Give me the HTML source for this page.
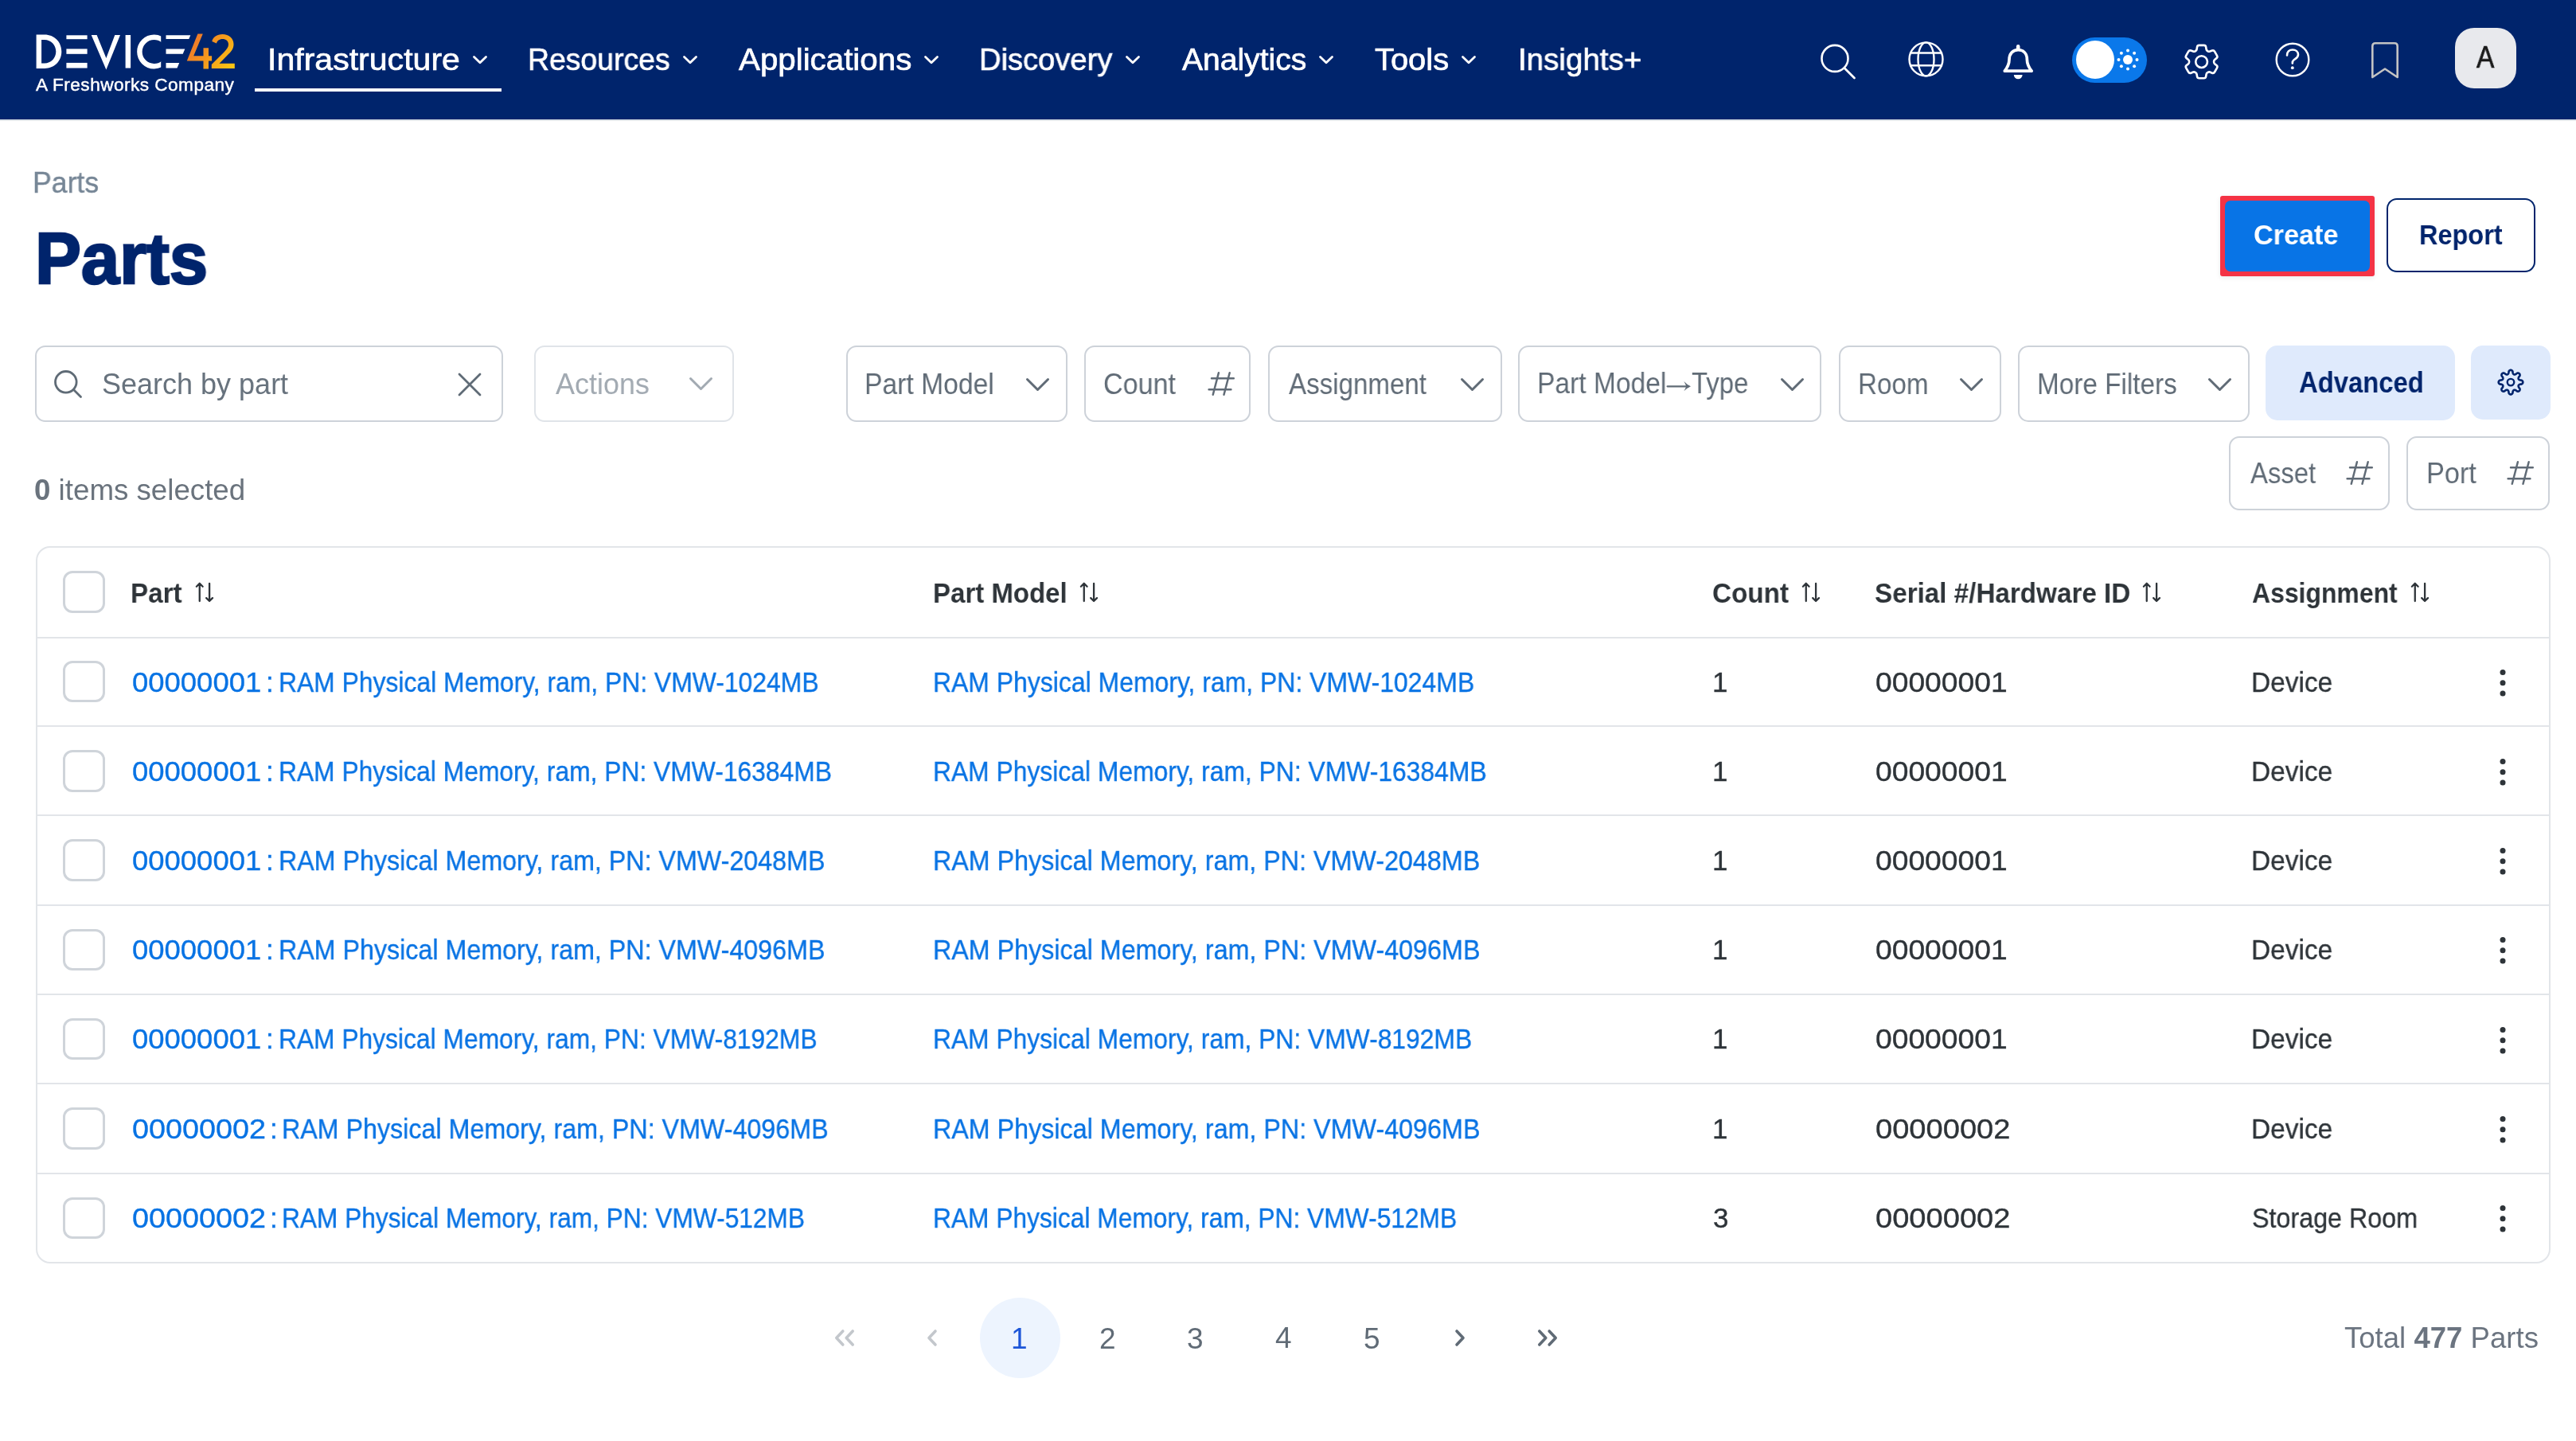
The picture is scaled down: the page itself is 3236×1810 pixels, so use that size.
<!DOCTYPE html>
<html><head><meta charset="utf-8"><title>Parts</title>
<style>
html,body{margin:0;padding:0;width:3236px;height:1810px;overflow:hidden;background:#fff;}
body{position:relative;font-family:"Liberation Sans",sans-serif;}
.t{position:absolute;white-space:nowrap;line-height:1;transform-origin:0 0;will-change:transform;}
svg{overflow:visible}
</style></head><body>
<div style="position:absolute;left:0px;top:0px;width:3236px;height:150px;box-sizing:border-box;background:#00246c"></div>
<div style="position:absolute;left:0px;top:150px;width:3236px;height:2px;box-sizing:border-box;background:#e1e5ea"></div>
<svg style="position:absolute;left:40px;top:35px" width="260" height="60" viewBox="0 0 260 60" fill="none">
<defs><linearGradient id="lg" gradientUnits="userSpaceOnUse" x1="192" y1="5" x2="256" y2="50">
<stop offset="0" stop-color="#ec6a2f"/><stop offset="0.5" stop-color="#f4951f"/><stop offset="1" stop-color="#fdca12"/></linearGradient>
<clipPath id="cc"><rect x="120" y="0" width="42.2" height="60"/></clipPath></defs>
<g fill="#fff">
<path d="M5.6 8.6 H16 C28 8.6 37.3 17.5 37.3 29.8 C37.3 42 28 51 16 51 H5.6 Z M12.1 15.1 V44.5 H16 C24 44.5 30.3 38 30.3 29.8 C30.3 21.6 24 15.1 16 15.1 Z"/>
<rect x="43.4" y="9.3" width="26.2" height="4.9"/>
<rect x="43.4" y="26.4" width="26.2" height="6.4"/>
<rect x="43.4" y="43.9" width="26.2" height="6.6"/>
<path d="M74.7 9 H81.6 L93.4 38 L104.3 9 H111 L93.4 52.5 Z"/>
<rect x="117.6" y="9" width="6.5" height="41.5"/>
<path d="M168.5 9.2 H199.3 L197.3 14.1 H168.5 Z"/>
<path d="M168.5 26.4 H192.3 L189.7 32.8 H168.5 Z"/>
<path d="M168.5 43.9 H185.2 L182.5 50.5 H168.5 Z"/>
</g>
<circle cx="153.6" cy="30" r="18.2" stroke="#fff" stroke-width="6.5" clip-path="url(#cc)"/>
<path fill="url(#lg)" d="M208.4 7.6 H214.8 L203.2 35.3 H215.5 V25.2 H222 V35.3 H226.1 V41.4 H222 V51.5 H215.5 V41.4 H194.8 Z"/>
<path fill="url(#lg)" d="M226.3 17 C227.5 11.5 232.5 8 239.5 8 C247.5 8 253.5 13 253.5 20.5 C253.5 26 250.5 30 245.5 34.5 L235.5 44.7 H254.8 V51 H225.8 V46 L241 31 C245 27 247 24 247 20.8 C247 16.5 243.8 14 239.5 14 C235.5 14 232.8 16.3 232 19.5 Z"/>
</svg>
<svg style="position:absolute;left:593px;top:67px" width="20" height="17" viewBox="0 0 20 17" fill="none"><path d="M2.5 4.5 L10 11.8 L17.5 4.5" stroke="#fff" stroke-width="2.8" stroke-linecap="round" stroke-linejoin="round"/></svg>
<svg style="position:absolute;left:857px;top:67px" width="20" height="17" viewBox="0 0 20 17" fill="none"><path d="M2.5 4.5 L10 11.8 L17.5 4.5" stroke="#fff" stroke-width="2.8" stroke-linecap="round" stroke-linejoin="round"/></svg>
<svg style="position:absolute;left:1160px;top:67px" width="20" height="17" viewBox="0 0 20 17" fill="none"><path d="M2.5 4.5 L10 11.8 L17.5 4.5" stroke="#fff" stroke-width="2.8" stroke-linecap="round" stroke-linejoin="round"/></svg>
<svg style="position:absolute;left:1413px;top:67px" width="20" height="17" viewBox="0 0 20 17" fill="none"><path d="M2.5 4.5 L10 11.8 L17.5 4.5" stroke="#fff" stroke-width="2.8" stroke-linecap="round" stroke-linejoin="round"/></svg>
<svg style="position:absolute;left:1656px;top:67px" width="20" height="17" viewBox="0 0 20 17" fill="none"><path d="M2.5 4.5 L10 11.8 L17.5 4.5" stroke="#fff" stroke-width="2.8" stroke-linecap="round" stroke-linejoin="round"/></svg>
<svg style="position:absolute;left:1835px;top:67px" width="20" height="17" viewBox="0 0 20 17" fill="none"><path d="M2.5 4.5 L10 11.8 L17.5 4.5" stroke="#fff" stroke-width="2.8" stroke-linecap="round" stroke-linejoin="round"/></svg>
<div style="position:absolute;left:320px;top:111px;width:310px;height:4px;box-sizing:border-box;background:#fff"></div>
<svg style="position:absolute;left:2280px;top:50px" width="60" height="56" viewBox="0 0 60 56" fill="none"><circle cx="25" cy="23.4" r="16.5" stroke="#fff" stroke-width="2.6"/><path d="M37 35.5 L49.5 48" stroke="#fff" stroke-width="2.8" stroke-linecap="round"/></svg>
<svg style="position:absolute;left:2390px;top:46px" width="60" height="58" viewBox="0 0 60 58" fill="none"><g stroke="#fff" stroke-width="2.4"><circle cx="29.5" cy="28.4" r="21"/><ellipse cx="29.5" cy="28.4" rx="10" ry="21"/><path d="M9 20.5 H50 M9 36.3 H50"/></g></svg>
<svg style="position:absolute;left:2510px;top:50px" width="50" height="56" viewBox="0 0 50 56" fill="none"><path d="M8.3 39.2 C12.3 34 14 30 14 25 C14 17.3 18.5 12.7 25.2 12.7 C31.9 12.7 36.4 17.3 36.4 25 C36.4 30 38.1 34 42.1 39.2 Z" stroke="#fff" stroke-width="3.7" stroke-linejoin="round"/><path d="M25.2 8.4 V10.6" stroke="#fff" stroke-width="4.6" stroke-linecap="round"/><path d="M19.8 43.9 A5.4 5.4 0 0 0 30.6 43.9 Z" fill="#fff"/></svg>
<div style="position:absolute;left:2603px;top:47px;width:94px;height:57px;box-sizing:border-box;background:#0a78ea;border-radius:29px"></div>
<div style="position:absolute;left:2608px;top:51px;width:48px;height:48px;box-sizing:border-box;background:#fff;border-radius:50%"></div>
<svg style="position:absolute;left:2653px;top:55px" width="40" height="40" viewBox="0 0 40 40" fill="none"><circle cx="20" cy="20" r="6" fill="#fff"/><circle cx="31.50" cy="20.00" r="2" fill="#fff"/><circle cx="28.13" cy="28.13" r="2" fill="#fff"/><circle cx="20.00" cy="31.50" r="2" fill="#fff"/><circle cx="11.87" cy="28.13" r="2" fill="#fff"/><circle cx="8.50" cy="20.00" r="2" fill="#fff"/><circle cx="11.87" cy="11.87" r="2" fill="#fff"/><circle cx="20.00" cy="8.50" r="2" fill="#fff"/><circle cx="28.13" cy="11.87" r="2" fill="#fff"/></svg>
<svg style="position:absolute;left:2737.9px;top:50px" width="55.2" height="55.2" viewBox="0 0 24 24" fill="none"><path d="M9.594 3.94c.09-.542.56-.94 1.11-.94h2.593c.55 0 1.02.398 1.11.94l.213 1.281c.063.374.313.686.645.87.074.04.147.083.22.127.325.196.72.257 1.075.124l1.217-.456a1.125 1.125 0 0 1 1.37.49l1.296 2.247a1.125 1.125 0 0 1-.26 1.431l-1.003.827c-.293.241-.438.613-.43.992a7.723 7.723 0 0 1 0 .255c-.008.378.137.75.43.991l1.004.827c.424.35.534.955.26 1.43l-1.298 2.247a1.125 1.125 0 0 1-1.369.491l-1.217-.456c-.355-.133-.75-.072-1.076.124a6.47 6.47 0 0 1-.22.128c-.331.183-.581.495-.644.869l-.213 1.281c-.09.543-.56.94-1.11.94h-2.594c-.55 0-1.019-.398-1.11-.94l-.213-1.281c-.062-.374-.312-.686-.644-.87a6.52 6.52 0 0 1-.22-.127c-.325-.196-.72-.257-1.076-.124l-1.217.456a1.125 1.125 0 0 1-1.369-.49l-1.297-2.247a1.125 1.125 0 0 1 .26-1.431l1.004-.827c.292-.24.437-.613.43-.991a6.932 6.932 0 0 1 0-.255c.007-.38-.138-.751-.43-.992l-1.004-.827a1.125 1.125 0 0 1-.26-1.43l1.297-2.247a1.125 1.125 0 0 1 1.37-.491l1.216.456c.356.133.751.072 1.076-.124.072-.044.146-.086.22-.128.332-.183.582-.495.644-.869l.214-1.28Z" stroke="#fff" stroke-width="1.15" stroke-linejoin="round"/><circle cx="12" cy="12" r="3.2" stroke="#fff" stroke-width="1.15"/></svg>
<svg style="position:absolute;left:2855px;top:50px" width="50" height="50" viewBox="0 0 50 50" fill="none"><circle cx="25" cy="25" r="20.3" stroke="#fff" stroke-width="2.4"/><path d="M18 19.5 C18 15 21 12.5 25 12.5 C29 12.5 32 15 32 18.8 C32 22.5 28.5 23.8 26.3 25.5 C25.2 26.3 24.8 27.5 24.8 29.5" stroke="#fff" stroke-width="2.6" stroke-linecap="round"/><circle cx="24.8" cy="35.2" r="1.9" fill="#fff"/></svg>
<svg style="position:absolute;left:2975px;top:50px" width="42" height="50" viewBox="0 0 42 50" fill="none"><path d="M5.3 47 V8 Q5.3 4.3 9 4.3 H33 Q36.7 4.3 36.7 8 V47 L21 36.5 Z" stroke="#c3c3c3" stroke-width="2.6" stroke-linejoin="round"/></svg>
<div style="position:absolute;left:3084px;top:35px;width:77px;height:76px;box-sizing:border-box;background:#e8e9ed;border-radius:24px"></div>
<div style="position:absolute;left:2789px;top:246px;width:194px;height:101px;box-sizing:border-box;background:#f43345;border-radius:3px;box-shadow:0 2px 6px rgba(0,0,0,0.08)"></div>
<div style="position:absolute;left:2795px;top:252px;width:182px;height:89px;box-sizing:border-box;background:#0874e6;border-radius:7px"></div>
<div style="position:absolute;left:2998px;top:249px;width:187px;height:93px;box-sizing:border-box;border:2.6px solid #00246c;border-radius:13px;background:#fff"></div>
<div style="position:absolute;left:44px;top:434px;width:588px;height:96px;box-sizing:border-box;border:2px solid #cdd2d9;border-radius:13px;background:#fff"></div>
<svg style="position:absolute;left:66px;top:463px" width="40" height="40" viewBox="0 0 40 40" fill="none"><circle cx="16.8" cy="16.8" r="13.3" stroke="#5f6b76" stroke-width="2.8"/><path d="M26.5 26.5 L35.5 35.5" stroke="#5f6b76" stroke-width="2.8" stroke-linecap="round"/></svg>
<svg style="position:absolute;left:574px;top:467px" width="32" height="32" viewBox="0 0 32 32" fill="none"><path d="M3 3 L29 29 M29 3 L3 29" stroke="#5f6b76" stroke-width="2.8" stroke-linecap="round"/></svg>
<div style="position:absolute;left:671px;top:434px;width:251px;height:96px;box-sizing:border-box;border:2px solid #e0e4e9;border-radius:13px;background:#fff"></div>
<svg style="position:absolute;left:864px;top:472px" width="33" height="20" viewBox="0 0 33 20" fill="none"><path d="M3.5 3.5 L16.5 16.5 L29.5 3.5" stroke="#a2aab2" stroke-width="3" stroke-linecap="round" stroke-linejoin="round"/></svg>
<div style="position:absolute;left:1062.5px;top:434px;width:278.5px;height:96px;box-sizing:border-box;border:2px solid #cdd2d9;border-radius:13px;background:#fff"></div>
<svg style="position:absolute;left:1287px;top:472.5px" width="33" height="20" viewBox="0 0 33 20" fill="none"><path d="M3.5 3.5 L16.5 16.5 L29.5 3.5" stroke="#606b76" stroke-width="3" stroke-linecap="round" stroke-linejoin="round"/></svg>
<div style="position:absolute;left:1362px;top:434px;width:209px;height:96px;box-sizing:border-box;border:2px solid #cdd2d9;border-radius:13px;background:#fff"></div>
<svg style="position:absolute;left:1518px;top:467px" width="34" height="31" viewBox="0 0 34 31" fill="none"><g stroke="#606b76" stroke-width="2.5" stroke-linecap="round"><path d="M12.9 1.2 L5.75 28.7 M26.7 1.2 L19.5 28.7 M4 8.3 H31.8 M0.6 22.2 H28.4"/></g></svg>
<div style="position:absolute;left:1593px;top:434px;width:294px;height:96px;box-sizing:border-box;border:2px solid #cdd2d9;border-radius:13px;background:#fff"></div>
<svg style="position:absolute;left:1833px;top:472.5px" width="33" height="20" viewBox="0 0 33 20" fill="none"><path d="M3.5 3.5 L16.5 16.5 L29.5 3.5" stroke="#606b76" stroke-width="3" stroke-linecap="round" stroke-linejoin="round"/></svg>
<div style="position:absolute;left:1906.6px;top:434px;width:381.7000000000003px;height:96px;box-sizing:border-box;border:2px solid #cdd2d9;border-radius:13px;background:#fff"></div>
<svg style="position:absolute;left:2090px;top:476px" width="36" height="18" viewBox="0 0 36 18" fill="none"><path d="M4.6 9.3 H31" stroke="#606b76" stroke-width="2.3" stroke-linecap="round"/><path d="M25.4 3 Q29 7 34 9.3 Q29 11.6 25.4 15.2 Q27.6 11.5 28.2 9.3 Q27.6 7 25.4 3 Z" fill="#606b76"/></svg>
<svg style="position:absolute;left:2235px;top:472.5px" width="33" height="20" viewBox="0 0 33 20" fill="none"><path d="M3.5 3.5 L16.5 16.5 L29.5 3.5" stroke="#606b76" stroke-width="3" stroke-linecap="round" stroke-linejoin="round"/></svg>
<div style="position:absolute;left:2309.7px;top:434px;width:204.60000000000036px;height:96px;box-sizing:border-box;border:2px solid #cdd2d9;border-radius:13px;background:#fff"></div>
<svg style="position:absolute;left:2460px;top:472.5px" width="33" height="20" viewBox="0 0 33 20" fill="none"><path d="M3.5 3.5 L16.5 16.5 L29.5 3.5" stroke="#606b76" stroke-width="3" stroke-linecap="round" stroke-linejoin="round"/></svg>
<div style="position:absolute;left:2534.6px;top:434px;width:291.4000000000001px;height:96px;box-sizing:border-box;border:2px solid #cdd2d9;border-radius:13px;background:#fff"></div>
<svg style="position:absolute;left:2772px;top:472.5px" width="33" height="20" viewBox="0 0 33 20" fill="none"><path d="M3.5 3.5 L16.5 16.5 L29.5 3.5" stroke="#606b76" stroke-width="3" stroke-linecap="round" stroke-linejoin="round"/></svg>
<div style="position:absolute;left:2846px;top:434px;width:238px;height:94px;box-sizing:border-box;background:#dfeafc;border-radius:15px"></div>
<div style="position:absolute;left:3104px;top:434px;width:100px;height:93px;box-sizing:border-box;background:#dfeafc;border-radius:15px"></div>
<svg style="position:absolute;left:3134px;top:460px" width="40" height="40" viewBox="0 0 40 40" fill="none"><path d="M20.00 4.80 L20.40 4.83 L20.79 4.93 L21.18 5.10 L21.55 5.35 L21.90 5.67 L22.22 6.09 L22.48 6.70 L22.55 8.10 L22.74 8.71 L22.94 9.14 L23.14 9.49 L23.36 9.77 L23.58 10.00 L23.81 10.18 L24.06 10.31 L24.32 10.39 L24.61 10.43 L24.93 10.42 L25.28 10.38 L25.67 10.28 L26.12 10.11 L26.68 9.81 L27.72 8.87 L28.34 8.63 L28.86 8.55 L29.34 8.57 L29.77 8.66 L30.16 8.81 L30.51 9.02 L30.82 9.28 L31.08 9.59 L31.29 9.94 L31.44 10.33 L31.53 10.76 L31.55 11.24 L31.47 11.76 L31.23 12.38 L30.29 13.42 L29.99 13.98 L29.82 14.43 L29.72 14.82 L29.68 15.17 L29.67 15.49 L29.71 15.78 L29.79 16.04 L29.92 16.29 L30.10 16.52 L30.33 16.74 L30.61 16.96 L30.96 17.16 L31.39 17.36 L32.00 17.55 L33.40 17.62 L34.01 17.88 L34.43 18.20 L34.75 18.55 L35.00 18.92 L35.17 19.31 L35.27 19.70 L35.30 20.10 L35.27 20.50 L35.17 20.89 L35.00 21.28 L34.75 21.65 L34.43 22.00 L34.01 22.32 L33.40 22.58 L32.00 22.65 L31.39 22.84 L30.96 23.04 L30.61 23.24 L30.33 23.46 L30.10 23.68 L29.92 23.91 L29.79 24.16 L29.71 24.42 L29.67 24.71 L29.68 25.03 L29.72 25.38 L29.82 25.77 L29.99 26.22 L30.29 26.78 L31.23 27.82 L31.47 28.44 L31.55 28.96 L31.53 29.44 L31.44 29.87 L31.29 30.26 L31.08 30.61 L30.82 30.92 L30.51 31.18 L30.16 31.39 L29.77 31.54 L29.34 31.63 L28.86 31.65 L28.34 31.57 L27.72 31.33 L26.68 30.39 L26.12 30.09 L25.67 29.92 L25.28 29.82 L24.93 29.78 L24.61 29.77 L24.32 29.81 L24.06 29.89 L23.81 30.02 L23.58 30.20 L23.36 30.43 L23.14 30.71 L22.94 31.06 L22.74 31.49 L22.55 32.10 L22.48 33.50 L22.22 34.11 L21.90 34.53 L21.55 34.85 L21.18 35.10 L20.79 35.27 L20.40 35.37 L20.00 35.40 L19.60 35.37 L19.21 35.27 L18.82 35.10 L18.45 34.85 L18.10 34.53 L17.78 34.11 L17.52 33.50 L17.45 32.10 L17.26 31.49 L17.06 31.06 L16.86 30.71 L16.64 30.43 L16.42 30.20 L16.19 30.02 L15.94 29.89 L15.68 29.81 L15.39 29.77 L15.07 29.78 L14.72 29.82 L14.33 29.92 L13.88 30.09 L13.32 30.39 L12.28 31.33 L11.66 31.57 L11.14 31.65 L10.66 31.63 L10.23 31.54 L9.84 31.39 L9.49 31.18 L9.18 30.92 L8.92 30.61 L8.71 30.26 L8.56 29.87 L8.47 29.44 L8.45 28.96 L8.53 28.44 L8.77 27.82 L9.71 26.78 L10.01 26.22 L10.18 25.77 L10.28 25.38 L10.32 25.03 L10.33 24.71 L10.29 24.42 L10.21 24.16 L10.08 23.91 L9.90 23.68 L9.67 23.46 L9.39 23.24 L9.04 23.04 L8.61 22.84 L8.00 22.65 L6.60 22.58 L5.99 22.32 L5.57 22.00 L5.25 21.65 L5.00 21.28 L4.83 20.89 L4.73 20.50 L4.70 20.10 L4.73 19.70 L4.83 19.31 L5.00 18.92 L5.25 18.55 L5.57 18.20 L5.99 17.88 L6.60 17.62 L8.00 17.55 L8.61 17.36 L9.04 17.16 L9.39 16.96 L9.67 16.74 L9.90 16.52 L10.08 16.29 L10.21 16.04 L10.29 15.78 L10.33 15.49 L10.32 15.17 L10.28 14.82 L10.18 14.43 L10.01 13.98 L9.71 13.42 L8.77 12.38 L8.53 11.76 L8.45 11.24 L8.47 10.76 L8.56 10.33 L8.71 9.94 L8.92 9.59 L9.18 9.28 L9.49 9.02 L9.84 8.81 L10.23 8.66 L10.66 8.57 L11.14 8.55 L11.66 8.63 L12.28 8.87 L13.32 9.81 L13.88 10.11 L14.33 10.28 L14.72 10.38 L15.07 10.42 L15.39 10.43 L15.68 10.39 L15.94 10.31 L16.19 10.18 L16.42 10.00 L16.64 9.77 L16.86 9.49 L17.06 9.14 L17.26 8.71 L17.45 8.10 L17.52 6.70 L17.78 6.09 L18.10 5.67 L18.45 5.35 L18.82 5.10 L19.21 4.93 L19.60 4.83 L20.00 4.80 Z" stroke="#00246c" stroke-width="2.6" stroke-linejoin="round"/><circle cx="20" cy="20.1" r="4.25" stroke="#00246c" stroke-width="2.4"/></svg>
<div style="position:absolute;left:2799.5px;top:547.5px;width:202.5px;height:93.79999999999995px;box-sizing:border-box;border:2px solid #cdd2d9;border-radius:13px;background:#fff"></div>
<svg style="position:absolute;left:2948px;top:579px" width="34" height="31" viewBox="0 0 34 31" fill="none"><g stroke="#606b76" stroke-width="2.5" stroke-linecap="round"><path d="M12.9 1.2 L5.75 28.7 M26.7 1.2 L19.5 28.7 M4 8.3 H31.8 M0.6 22.2 H28.4"/></g></svg>
<div style="position:absolute;left:3022.5px;top:547.5px;width:180.9000000000001px;height:93.79999999999995px;box-sizing:border-box;border:2px solid #cdd2d9;border-radius:13px;background:#fff"></div>
<svg style="position:absolute;left:3149.6px;top:579px" width="34" height="31" viewBox="0 0 34 31" fill="none"><g stroke="#606b76" stroke-width="2.5" stroke-linecap="round"><path d="M12.9 1.2 L5.75 28.7 M26.7 1.2 L19.5 28.7 M4 8.3 H31.8 M0.6 22.2 H28.4"/></g></svg>
<div style="position:absolute;left:45px;top:686px;width:3159px;height:901px;box-sizing:border-box;border:2px solid #e2e5e9;border-radius:18px;background:#fff"></div>
<div style="position:absolute;left:79px;top:717.0px;width:53px;height:52.59999999999991px;box-sizing:border-box;border:3.6px solid #cfd4da;border-radius:12px;background:#fff"></div>
<svg style="position:absolute;left:245.8px;top:731px" width="24" height="26" viewBox="0 0 24 26" fill="none"><g stroke="#2e3439" stroke-width="2.3" stroke-linecap="round" stroke-linejoin="round"><path d="M4.75 24 V1.8 M0.9 5.7 L4.75 1.8 L8.6 5.7 M17.1 1.8 V24 M13.2 20.1 L17.1 24 L21 20.1"/></g></svg>
<svg style="position:absolute;left:1356.7px;top:731px" width="24" height="26" viewBox="0 0 24 26" fill="none"><g stroke="#2e3439" stroke-width="2.3" stroke-linecap="round" stroke-linejoin="round"><path d="M4.75 24 V1.8 M0.9 5.7 L4.75 1.8 L8.6 5.7 M17.1 1.8 V24 M13.2 20.1 L17.1 24 L21 20.1"/></g></svg>
<svg style="position:absolute;left:2264px;top:731px" width="24" height="26" viewBox="0 0 24 26" fill="none"><g stroke="#2e3439" stroke-width="2.3" stroke-linecap="round" stroke-linejoin="round"><path d="M4.75 24 V1.8 M0.9 5.7 L4.75 1.8 L8.6 5.7 M17.1 1.8 V24 M13.2 20.1 L17.1 24 L21 20.1"/></g></svg>
<svg style="position:absolute;left:2692px;top:731px" width="24" height="26" viewBox="0 0 24 26" fill="none"><g stroke="#2e3439" stroke-width="2.3" stroke-linecap="round" stroke-linejoin="round"><path d="M4.75 24 V1.8 M0.9 5.7 L4.75 1.8 L8.6 5.7 M17.1 1.8 V24 M13.2 20.1 L17.1 24 L21 20.1"/></g></svg>
<svg style="position:absolute;left:3028.8px;top:731px" width="24" height="26" viewBox="0 0 24 26" fill="none"><g stroke="#2e3439" stroke-width="2.3" stroke-linecap="round" stroke-linejoin="round"><path d="M4.75 24 V1.8 M0.9 5.7 L4.75 1.8 L8.6 5.7 M17.1 1.8 V24 M13.2 20.1 L17.1 24 L21 20.1"/></g></svg>
<div style="position:absolute;left:47px;top:800px;width:3155px;height:2px;box-sizing:border-box;background:#e2e5e9"></div>
<div style="position:absolute;left:79px;top:829.7px;width:53px;height:52.59999999999991px;box-sizing:border-box;border:3.6px solid #cfd4da;border-radius:12px;background:#fff"></div>
<svg style="position:absolute;left:3137px;top:836.5px" width="14" height="36" viewBox="0 0 14 36" fill="none"><g fill="#2e3439"><circle cx="7" cy="7.5" r="3.5"/><circle cx="7" cy="20.7" r="3.5"/><circle cx="7" cy="34" r="3.5"/></g></svg>
<div style="position:absolute;left:47px;top:911px;width:3155px;height:2px;box-sizing:border-box;background:#e2e5e9"></div>
<div style="position:absolute;left:79px;top:942.0px;width:53px;height:52.59999999999991px;box-sizing:border-box;border:3.6px solid #cfd4da;border-radius:12px;background:#fff"></div>
<svg style="position:absolute;left:3137px;top:948.8px" width="14" height="36" viewBox="0 0 14 36" fill="none"><g fill="#2e3439"><circle cx="7" cy="7.5" r="3.5"/><circle cx="7" cy="20.7" r="3.5"/><circle cx="7" cy="34" r="3.5"/></g></svg>
<div style="position:absolute;left:47px;top:1023px;width:3155px;height:2px;box-sizing:border-box;background:#e2e5e9"></div>
<div style="position:absolute;left:79px;top:1054.3px;width:53px;height:52.59999999999991px;box-sizing:border-box;border:3.6px solid #cfd4da;border-radius:12px;background:#fff"></div>
<svg style="position:absolute;left:3137px;top:1061.1px" width="14" height="36" viewBox="0 0 14 36" fill="none"><g fill="#2e3439"><circle cx="7" cy="7.5" r="3.5"/><circle cx="7" cy="20.7" r="3.5"/><circle cx="7" cy="34" r="3.5"/></g></svg>
<div style="position:absolute;left:47px;top:1136px;width:3155px;height:2px;box-sizing:border-box;background:#e2e5e9"></div>
<div style="position:absolute;left:79px;top:1166.6000000000001px;width:53px;height:52.59999999999991px;box-sizing:border-box;border:3.6px solid #cfd4da;border-radius:12px;background:#fff"></div>
<svg style="position:absolute;left:3137px;top:1173.4px" width="14" height="36" viewBox="0 0 14 36" fill="none"><g fill="#2e3439"><circle cx="7" cy="7.5" r="3.5"/><circle cx="7" cy="20.7" r="3.5"/><circle cx="7" cy="34" r="3.5"/></g></svg>
<div style="position:absolute;left:47px;top:1248px;width:3155px;height:2px;box-sizing:border-box;background:#e2e5e9"></div>
<div style="position:absolute;left:79px;top:1278.9px;width:53px;height:52.59999999999991px;box-sizing:border-box;border:3.6px solid #cfd4da;border-radius:12px;background:#fff"></div>
<svg style="position:absolute;left:3137px;top:1285.7px" width="14" height="36" viewBox="0 0 14 36" fill="none"><g fill="#2e3439"><circle cx="7" cy="7.5" r="3.5"/><circle cx="7" cy="20.7" r="3.5"/><circle cx="7" cy="34" r="3.5"/></g></svg>
<div style="position:absolute;left:47px;top:1360px;width:3155px;height:2px;box-sizing:border-box;background:#e2e5e9"></div>
<div style="position:absolute;left:79px;top:1391.2px;width:53px;height:52.59999999999991px;box-sizing:border-box;border:3.6px solid #cfd4da;border-radius:12px;background:#fff"></div>
<svg style="position:absolute;left:3137px;top:1398.0px" width="14" height="36" viewBox="0 0 14 36" fill="none"><g fill="#2e3439"><circle cx="7" cy="7.5" r="3.5"/><circle cx="7" cy="20.7" r="3.5"/><circle cx="7" cy="34" r="3.5"/></g></svg>
<div style="position:absolute;left:47px;top:1473px;width:3155px;height:2px;box-sizing:border-box;background:#e2e5e9"></div>
<div style="position:absolute;left:79px;top:1503.5px;width:53px;height:52.59999999999991px;box-sizing:border-box;border:3.6px solid #cfd4da;border-radius:12px;background:#fff"></div>
<svg style="position:absolute;left:3137px;top:1510.3px" width="14" height="36" viewBox="0 0 14 36" fill="none"><g fill="#2e3439"><circle cx="7" cy="7.5" r="3.5"/><circle cx="7" cy="20.7" r="3.5"/><circle cx="7" cy="34" r="3.5"/></g></svg>
<div style="position:absolute;left:1231px;top:1630px;width:101px;height:101px;box-sizing:border-box;background:#edf4fe;border-radius:50%"></div>
<svg style="position:absolute;left:1046px;top:1670px" width="30" height="21" viewBox="-6 0 30 21" fill="none"><g transform="translate(-6.2,0)"><path d="M13 2 L5 10.5 L13 19" stroke="#c3c7cc" stroke-width="3.6" stroke-linecap="round" stroke-linejoin="round"/></g><g transform="translate(6.2,0)"><path d="M13 2 L5 10.5 L13 19" stroke="#c3c7cc" stroke-width="3.6" stroke-linecap="round" stroke-linejoin="round"/></g></svg>
<svg style="position:absolute;left:1162px;top:1670px" width="18" height="21" viewBox="0 0 18 21" fill="none"><path d="M13 2 L5 10.5 L13 19" stroke="#c3c7cc" stroke-width="3.6" stroke-linecap="round" stroke-linejoin="round"/></svg>
<svg style="position:absolute;left:1824.6px;top:1670px" width="18" height="21" viewBox="0 0 18 21" fill="none"><path d="M5 2 L13 10.5 L5 19" stroke="#606b76" stroke-width="3.6" stroke-linecap="round" stroke-linejoin="round"/></svg>
<svg style="position:absolute;left:1928.8px;top:1670px" width="30" height="21" viewBox="-6 0 30 21" fill="none"><g transform="translate(-6.2,0)"><path d="M5 2 L13 10.5 L5 19" stroke="#606b76" stroke-width="3.6" stroke-linecap="round" stroke-linejoin="round"/></g><g transform="translate(6.2,0)"><path d="M5 2 L13 10.5 L5 19" stroke="#606b76" stroke-width="3.6" stroke-linecap="round" stroke-linejoin="round"/></g></svg>
<div id="logo_sub" class="t" style="left:45.00px;top:96.37px;font-size:22.6px;font-weight:400;color:#fff;transform:scaleX(1.0000);letter-spacing:0.474px;-webkit-text-stroke:0.45px #fff">A Freshworks Company</div>
<div id="nav0" class="t" style="left:336.00px;top:54.81px;font-size:39px;font-weight:400;color:#fff;transform:scaleX(1.0528);letter-spacing:0.000px;-webkit-text-stroke:0.7px #fff">Infrastructure</div>
<div id="nav1" class="t" style="left:663.00px;top:54.81px;font-size:39px;font-weight:400;color:#fff;transform:scaleX(0.9580);letter-spacing:0.000px;-webkit-text-stroke:0.7px #fff">Resources</div>
<div id="nav2" class="t" style="left:928.00px;top:54.81px;font-size:39px;font-weight:400;color:#fff;transform:scaleX(1.0333);letter-spacing:0.000px;-webkit-text-stroke:0.7px #fff">Applications</div>
<div id="nav3" class="t" style="left:1230.00px;top:54.81px;font-size:39px;font-weight:400;color:#fff;transform:scaleX(0.9773);letter-spacing:0.000px;-webkit-text-stroke:0.7px #fff">Discovery</div>
<div id="nav4" class="t" style="left:1485.00px;top:54.81px;font-size:39px;font-weight:400;color:#fff;transform:scaleX(1.0007);letter-spacing:0.000px;-webkit-text-stroke:0.7px #fff">Analytics</div>
<div id="nav5" class="t" style="left:1727.00px;top:54.81px;font-size:39px;font-weight:400;color:#fff;transform:scaleX(1.0225);letter-spacing:0.000px;-webkit-text-stroke:0.7px #fff">Tools</div>
<div id="nav6" class="t" style="left:1906.50px;top:54.81px;font-size:39px;font-weight:400;color:#fff;transform:scaleX(0.9872);letter-spacing:0.000px;-webkit-text-stroke:0.7px #fff">Insights+</div>
<div id="avatar" class="t" style="left:3111.00px;top:52.70px;font-size:38px;font-weight:400;color:#1a1a1a;transform:scaleX(0.8800);letter-spacing:0.000px;-webkit-text-stroke:0.7px #1a1a1a">A</div>
<div id="bc" class="t" style="left:41.40px;top:212.13px;font-size:36.5px;font-weight:400;color:#768696;transform:scaleX(0.9753);letter-spacing:0.000px;-webkit-text-stroke:0.4px #768696">Parts</div>
<div id="title" class="t" style="left:43.50px;top:279.37px;font-size:91.5px;font-weight:700;color:#00246c;transform:scaleX(0.9483);letter-spacing:0.000px;-webkit-text-stroke:2.6px #00246c">Parts</div>
<div id="create" class="t" style="left:2831.00px;top:276.89px;font-size:35px;font-weight:700;color:#fff;transform:scaleX(0.9768);letter-spacing:0.000px;">Create</div>
<div id="report" class="t" style="left:3039.20px;top:276.89px;font-size:35px;font-weight:700;color:#00246c;transform:scaleX(0.9278);letter-spacing:0.000px;">Report</div>
<div id="search" class="t" style="left:128.30px;top:465.20px;font-size:36px;font-weight:400;color:#67727d;transform:scaleX(0.9996);letter-spacing:0.000px;">Search by part</div>
<div id="actions" class="t" style="left:698.00px;top:465.20px;font-size:36px;font-weight:400;color:#a2aab2;transform:scaleX(0.9986);letter-spacing:0.000px;">Actions</div>
<div id="f_pm" class="t" style="left:1086.40px;top:464.56px;font-size:36px;font-weight:400;color:#606b76;transform:scaleX(0.9353);letter-spacing:0.000px;">Part Model</div>
<div id="f_count" class="t" style="left:1386.00px;top:464.56px;font-size:36px;font-weight:400;color:#606b76;transform:scaleX(0.9472);letter-spacing:0.000px;">Count</div>
<div id="f_asg" class="t" style="left:1619.00px;top:464.56px;font-size:36px;font-weight:400;color:#606b76;transform:scaleX(0.9198);letter-spacing:0.000px;">Assignment</div>
<div id="f_pmt" class="t" style="left:1930.50px;top:464.08px;font-size:36px;font-weight:400;color:#606b76;transform:scaleX(0.9328);letter-spacing:0.000px;">Part Model</div>
<div id="f_pmt2" class="t" style="left:2124.50px;top:464.08px;font-size:36px;font-weight:400;color:#606b76;transform:scaleX(0.9141);letter-spacing:0.000px;">Type</div>
<div id="f_room" class="t" style="left:2334.00px;top:464.56px;font-size:36px;font-weight:400;color:#606b76;transform:scaleX(0.9222);letter-spacing:0.000px;">Room</div>
<div id="f_more" class="t" style="left:2559.00px;top:464.56px;font-size:36px;font-weight:400;color:#606b76;transform:scaleX(0.9250);letter-spacing:0.000px;">More Filters</div>
<div id="adv" class="t" style="left:2887.70px;top:463.20px;font-size:36px;font-weight:700;color:#00246c;transform:scaleX(0.9114);letter-spacing:0.000px;">Advanced</div>
<div id="f_asset" class="t" style="left:2826.60px;top:576.84px;font-size:36px;font-weight:400;color:#606b76;transform:scaleX(0.9129);letter-spacing:0.000px;">Asset</div>
<div id="f_port" class="t" style="left:3047.70px;top:576.84px;font-size:36px;font-weight:400;color:#606b76;transform:scaleX(0.9509);letter-spacing:0.000px;">Port</div>
<div id="sel" class="t" style="left:43.20px;top:598.14px;font-size:36.5px;font-weight:400;color:#6a737d;transform:scaleX(1.0054);letter-spacing:0.000px;"><b>0</b> items selected</div>
<div id="h0" class="t" style="left:163.80px;top:727.56px;font-size:35.5px;font-weight:700;color:#2e3439;transform:scaleX(0.9344);letter-spacing:0.000px;">Part</div>
<div id="h1" class="t" style="left:1172.20px;top:727.56px;font-size:35.5px;font-weight:700;color:#2e3439;transform:scaleX(0.9296);letter-spacing:0.000px;">Part Model</div>
<div id="h2" class="t" style="left:2150.80px;top:727.56px;font-size:35.5px;font-weight:700;color:#2e3439;transform:scaleX(0.9363);letter-spacing:0.000px;">Count</div>
<div id="h3" class="t" style="left:2355.00px;top:727.56px;font-size:35.5px;font-weight:700;color:#2e3439;transform:scaleX(0.9357);letter-spacing:0.000px;">Serial #/Hardware ID</div>
<div id="h4" class="t" style="left:2829.00px;top:727.56px;font-size:35.5px;font-weight:700;color:#2e3439;transform:scaleX(0.8990);letter-spacing:0.000px;">Assignment</div>
<div id="r0p0" class="t" style="left:165.50px;top:838.75px;font-size:35px;font-weight:400;color:#0873e4;transform:scaleX(1.0419);letter-spacing:0.000px;-webkit-text-stroke:0.35px #0873e4">00000001</div>
<div id="r0p1" class="t" style="left:334.00px;top:838.75px;font-size:35px;font-weight:400;color:#0873e4;transform:scaleX(1.0000);letter-spacing:0.000px;-webkit-text-stroke:0.35px #0873e4">:</div>
<div id="r0p2" class="t" style="left:349.70px;top:838.75px;font-size:35px;font-weight:400;color:#0873e4;transform:scaleX(0.9101);letter-spacing:0.000px;-webkit-text-stroke:0.35px #0873e4">RAM Physical Memory, ram, PN: VMW-1024MB</div>
<div id="r0m" class="t" style="left:1172.00px;top:838.75px;font-size:35px;font-weight:400;color:#0873e4;transform:scaleX(0.9123);letter-spacing:0.000px;-webkit-text-stroke:0.35px #0873e4">RAM Physical Memory, ram, PN: VMW-1024MB</div>
<div id="r0c" class="t" style="left:2151.00px;top:838.75px;font-size:35px;font-weight:400;color:#2e3439;transform:scaleX(1.0000);letter-spacing:0.000px;-webkit-text-stroke:0.35px #2e3439">1</div>
<div id="r0s" class="t" style="left:2356.20px;top:838.75px;font-size:35px;font-weight:400;color:#2e3439;transform:scaleX(1.0637);letter-spacing:0.000px;-webkit-text-stroke:0.35px #2e3439">00000001</div>
<div id="r0a" class="t" style="left:2828.20px;top:838.75px;font-size:35px;font-weight:400;color:#2e3439;transform:scaleX(0.9552);letter-spacing:0.000px;-webkit-text-stroke:0.35px #2e3439">Device</div>
<div id="r1p0" class="t" style="left:165.50px;top:950.89px;font-size:35px;font-weight:400;color:#0873e4;transform:scaleX(1.0419);letter-spacing:0.000px;-webkit-text-stroke:0.35px #0873e4">00000001</div>
<div id="r1p1" class="t" style="left:334.00px;top:950.89px;font-size:35px;font-weight:400;color:#0873e4;transform:scaleX(1.0000);letter-spacing:0.000px;-webkit-text-stroke:0.35px #0873e4">:</div>
<div id="r1p2" class="t" style="left:349.70px;top:950.89px;font-size:35px;font-weight:400;color:#0873e4;transform:scaleX(0.9084);letter-spacing:0.000px;-webkit-text-stroke:0.35px #0873e4">RAM Physical Memory, ram, PN: VMW-16384MB</div>
<div id="r1m" class="t" style="left:1172.00px;top:950.89px;font-size:35px;font-weight:400;color:#0873e4;transform:scaleX(0.9092);letter-spacing:0.000px;-webkit-text-stroke:0.35px #0873e4">RAM Physical Memory, ram, PN: VMW-16384MB</div>
<div id="r1c" class="t" style="left:2151.00px;top:950.89px;font-size:35px;font-weight:400;color:#2e3439;transform:scaleX(1.0000);letter-spacing:0.000px;-webkit-text-stroke:0.35px #2e3439">1</div>
<div id="r1s" class="t" style="left:2356.20px;top:950.89px;font-size:35px;font-weight:400;color:#2e3439;transform:scaleX(1.0637);letter-spacing:0.000px;-webkit-text-stroke:0.35px #2e3439">00000001</div>
<div id="r1a" class="t" style="left:2828.20px;top:950.89px;font-size:35px;font-weight:400;color:#2e3439;transform:scaleX(0.9552);letter-spacing:0.000px;-webkit-text-stroke:0.35px #2e3439">Device</div>
<div id="r2p0" class="t" style="left:165.50px;top:1063.03px;font-size:35px;font-weight:400;color:#0873e4;transform:scaleX(1.0419);letter-spacing:0.000px;-webkit-text-stroke:0.35px #0873e4">00000001</div>
<div id="r2p1" class="t" style="left:334.00px;top:1063.03px;font-size:35px;font-weight:400;color:#0873e4;transform:scaleX(1.0000);letter-spacing:0.000px;-webkit-text-stroke:0.35px #0873e4">:</div>
<div id="r2p2" class="t" style="left:349.70px;top:1063.03px;font-size:35px;font-weight:400;color:#0873e4;transform:scaleX(0.9207);letter-spacing:0.000px;-webkit-text-stroke:0.35px #0873e4">RAM Physical Memory, ram, PN: VMW-2048MB</div>
<div id="r2m" class="t" style="left:1172.00px;top:1063.03px;font-size:35px;font-weight:400;color:#0873e4;transform:scaleX(0.9217);letter-spacing:0.000px;-webkit-text-stroke:0.35px #0873e4">RAM Physical Memory, ram, PN: VMW-2048MB</div>
<div id="r2c" class="t" style="left:2151.00px;top:1063.03px;font-size:35px;font-weight:400;color:#2e3439;transform:scaleX(1.0000);letter-spacing:0.000px;-webkit-text-stroke:0.35px #2e3439">1</div>
<div id="r2s" class="t" style="left:2356.20px;top:1063.03px;font-size:35px;font-weight:400;color:#2e3439;transform:scaleX(1.0637);letter-spacing:0.000px;-webkit-text-stroke:0.35px #2e3439">00000001</div>
<div id="r2a" class="t" style="left:2828.20px;top:1063.03px;font-size:35px;font-weight:400;color:#2e3439;transform:scaleX(0.9552);letter-spacing:0.000px;-webkit-text-stroke:0.35px #2e3439">Device</div>
<div id="r3p0" class="t" style="left:165.50px;top:1175.17px;font-size:35px;font-weight:400;color:#0873e4;transform:scaleX(1.0419);letter-spacing:0.000px;-webkit-text-stroke:0.35px #0873e4">00000001</div>
<div id="r3p1" class="t" style="left:334.00px;top:1175.17px;font-size:35px;font-weight:400;color:#0873e4;transform:scaleX(1.0000);letter-spacing:0.000px;-webkit-text-stroke:0.35px #0873e4">:</div>
<div id="r3p2" class="t" style="left:349.70px;top:1175.17px;font-size:35px;font-weight:400;color:#0873e4;transform:scaleX(0.9207);letter-spacing:0.000px;-webkit-text-stroke:0.35px #0873e4">RAM Physical Memory, ram, PN: VMW-4096MB</div>
<div id="r3m" class="t" style="left:1172.00px;top:1175.17px;font-size:35px;font-weight:400;color:#0873e4;transform:scaleX(0.9220);letter-spacing:0.000px;-webkit-text-stroke:0.35px #0873e4">RAM Physical Memory, ram, PN: VMW-4096MB</div>
<div id="r3c" class="t" style="left:2151.00px;top:1175.17px;font-size:35px;font-weight:400;color:#2e3439;transform:scaleX(1.0000);letter-spacing:0.000px;-webkit-text-stroke:0.35px #2e3439">1</div>
<div id="r3s" class="t" style="left:2356.20px;top:1175.17px;font-size:35px;font-weight:400;color:#2e3439;transform:scaleX(1.0637);letter-spacing:0.000px;-webkit-text-stroke:0.35px #2e3439">00000001</div>
<div id="r3a" class="t" style="left:2828.20px;top:1175.17px;font-size:35px;font-weight:400;color:#2e3439;transform:scaleX(0.9552);letter-spacing:0.000px;-webkit-text-stroke:0.35px #2e3439">Device</div>
<div id="r4p0" class="t" style="left:165.50px;top:1287.31px;font-size:35px;font-weight:400;color:#0873e4;transform:scaleX(1.0419);letter-spacing:0.000px;-webkit-text-stroke:0.35px #0873e4">00000001</div>
<div id="r4p1" class="t" style="left:334.00px;top:1287.31px;font-size:35px;font-weight:400;color:#0873e4;transform:scaleX(1.0000);letter-spacing:0.000px;-webkit-text-stroke:0.35px #0873e4">:</div>
<div id="r4p2" class="t" style="left:349.70px;top:1287.31px;font-size:35px;font-weight:400;color:#0873e4;transform:scaleX(0.9074);letter-spacing:0.000px;-webkit-text-stroke:0.35px #0873e4">RAM Physical Memory, ram, PN: VMW-8192MB</div>
<div id="r4m" class="t" style="left:1172.00px;top:1287.31px;font-size:35px;font-weight:400;color:#0873e4;transform:scaleX(0.9082);letter-spacing:0.000px;-webkit-text-stroke:0.35px #0873e4">RAM Physical Memory, ram, PN: VMW-8192MB</div>
<div id="r4c" class="t" style="left:2151.00px;top:1287.31px;font-size:35px;font-weight:400;color:#2e3439;transform:scaleX(1.0000);letter-spacing:0.000px;-webkit-text-stroke:0.35px #2e3439">1</div>
<div id="r4s" class="t" style="left:2356.20px;top:1287.31px;font-size:35px;font-weight:400;color:#2e3439;transform:scaleX(1.0637);letter-spacing:0.000px;-webkit-text-stroke:0.35px #2e3439">00000001</div>
<div id="r4a" class="t" style="left:2828.20px;top:1287.31px;font-size:35px;font-weight:400;color:#2e3439;transform:scaleX(0.9552);letter-spacing:0.000px;-webkit-text-stroke:0.35px #2e3439">Device</div>
<div id="r5p0" class="t" style="left:165.50px;top:1400.25px;font-size:35px;font-weight:400;color:#0873e4;transform:scaleX(1.0784);letter-spacing:0.000px;-webkit-text-stroke:0.35px #0873e4">00000002</div>
<div id="r5p1" class="t" style="left:338.50px;top:1400.25px;font-size:35px;font-weight:400;color:#0873e4;transform:scaleX(1.0000);letter-spacing:0.000px;-webkit-text-stroke:0.35px #0873e4">:</div>
<div id="r5p2" class="t" style="left:354.20px;top:1400.25px;font-size:35px;font-weight:400;color:#0873e4;transform:scaleX(0.9209);letter-spacing:0.000px;-webkit-text-stroke:0.35px #0873e4">RAM Physical Memory, ram, PN: VMW-4096MB</div>
<div id="r5m" class="t" style="left:1172.00px;top:1400.25px;font-size:35px;font-weight:400;color:#0873e4;transform:scaleX(0.9220);letter-spacing:0.000px;-webkit-text-stroke:0.35px #0873e4">RAM Physical Memory, ram, PN: VMW-4096MB</div>
<div id="r5c" class="t" style="left:2151.00px;top:1400.25px;font-size:35px;font-weight:400;color:#2e3439;transform:scaleX(1.0000);letter-spacing:0.000px;-webkit-text-stroke:0.35px #2e3439">1</div>
<div id="r5s" class="t" style="left:2356.20px;top:1400.25px;font-size:35px;font-weight:400;color:#2e3439;transform:scaleX(1.0882);letter-spacing:0.000px;-webkit-text-stroke:0.35px #2e3439">00000002</div>
<div id="r5a" class="t" style="left:2828.20px;top:1400.25px;font-size:35px;font-weight:400;color:#2e3439;transform:scaleX(0.9552);letter-spacing:0.000px;-webkit-text-stroke:0.35px #2e3439">Device</div>
<div id="r6p0" class="t" style="left:165.50px;top:1512.39px;font-size:35px;font-weight:400;color:#0873e4;transform:scaleX(1.0784);letter-spacing:0.000px;-webkit-text-stroke:0.35px #0873e4">00000002</div>
<div id="r6p1" class="t" style="left:338.50px;top:1512.39px;font-size:35px;font-weight:400;color:#0873e4;transform:scaleX(1.0000);letter-spacing:0.000px;-webkit-text-stroke:0.35px #0873e4">:</div>
<div id="r6p2" class="t" style="left:354.20px;top:1512.39px;font-size:35px;font-weight:400;color:#0873e4;transform:scaleX(0.9049);letter-spacing:0.000px;-webkit-text-stroke:0.35px #0873e4">RAM Physical Memory, ram, PN: VMW-512MB</div>
<div id="r6m" class="t" style="left:1172.00px;top:1512.39px;font-size:35px;font-weight:400;color:#0873e4;transform:scaleX(0.9065);letter-spacing:0.000px;-webkit-text-stroke:0.35px #0873e4">RAM Physical Memory, ram, PN: VMW-512MB</div>
<div id="r6c" class="t" style="left:2152.00px;top:1512.39px;font-size:35px;font-weight:400;color:#2e3439;transform:scaleX(1.0000);letter-spacing:0.000px;-webkit-text-stroke:0.35px #2e3439">3</div>
<div id="r6s" class="t" style="left:2356.20px;top:1512.39px;font-size:35px;font-weight:400;color:#2e3439;transform:scaleX(1.0882);letter-spacing:0.000px;-webkit-text-stroke:0.35px #2e3439">00000002</div>
<div id="r6a" class="t" style="left:2829.20px;top:1512.39px;font-size:35px;font-weight:400;color:#2e3439;transform:scaleX(0.9218);letter-spacing:0.000px;-webkit-text-stroke:0.35px #2e3439">Storage Room</div>
<div id="pg0" class="t" style="left:1269.50px;top:1662.77px;font-size:37px;font-weight:400;color:#1d56d8;transform:scaleX(1.0000);letter-spacing:0.000px;">1</div>
<div id="pg1" class="t" style="left:1381.00px;top:1662.77px;font-size:37px;font-weight:400;color:#606b76;transform:scaleX(1.0000);letter-spacing:0.000px;">2</div>
<div id="pg2" class="t" style="left:1491.30px;top:1662.77px;font-size:37px;font-weight:400;color:#606b76;transform:scaleX(1.0000);letter-spacing:0.000px;">3</div>
<div id="pg3" class="t" style="left:1602.40px;top:1662.45px;font-size:37px;font-weight:400;color:#606b76;transform:scaleX(1.0000);letter-spacing:0.000px;">4</div>
<div id="pg4" class="t" style="left:1712.70px;top:1662.77px;font-size:37px;font-weight:400;color:#606b76;transform:scaleX(1.0000);letter-spacing:0.000px;">5</div>
<div id="total" class="t" style="left:2944.60px;top:1662.62px;font-size:36px;font-weight:400;color:#6b7480;transform:scaleX(1.0157);letter-spacing:0.000px;">Total <b>477</b> Parts</div>
</body></html>
